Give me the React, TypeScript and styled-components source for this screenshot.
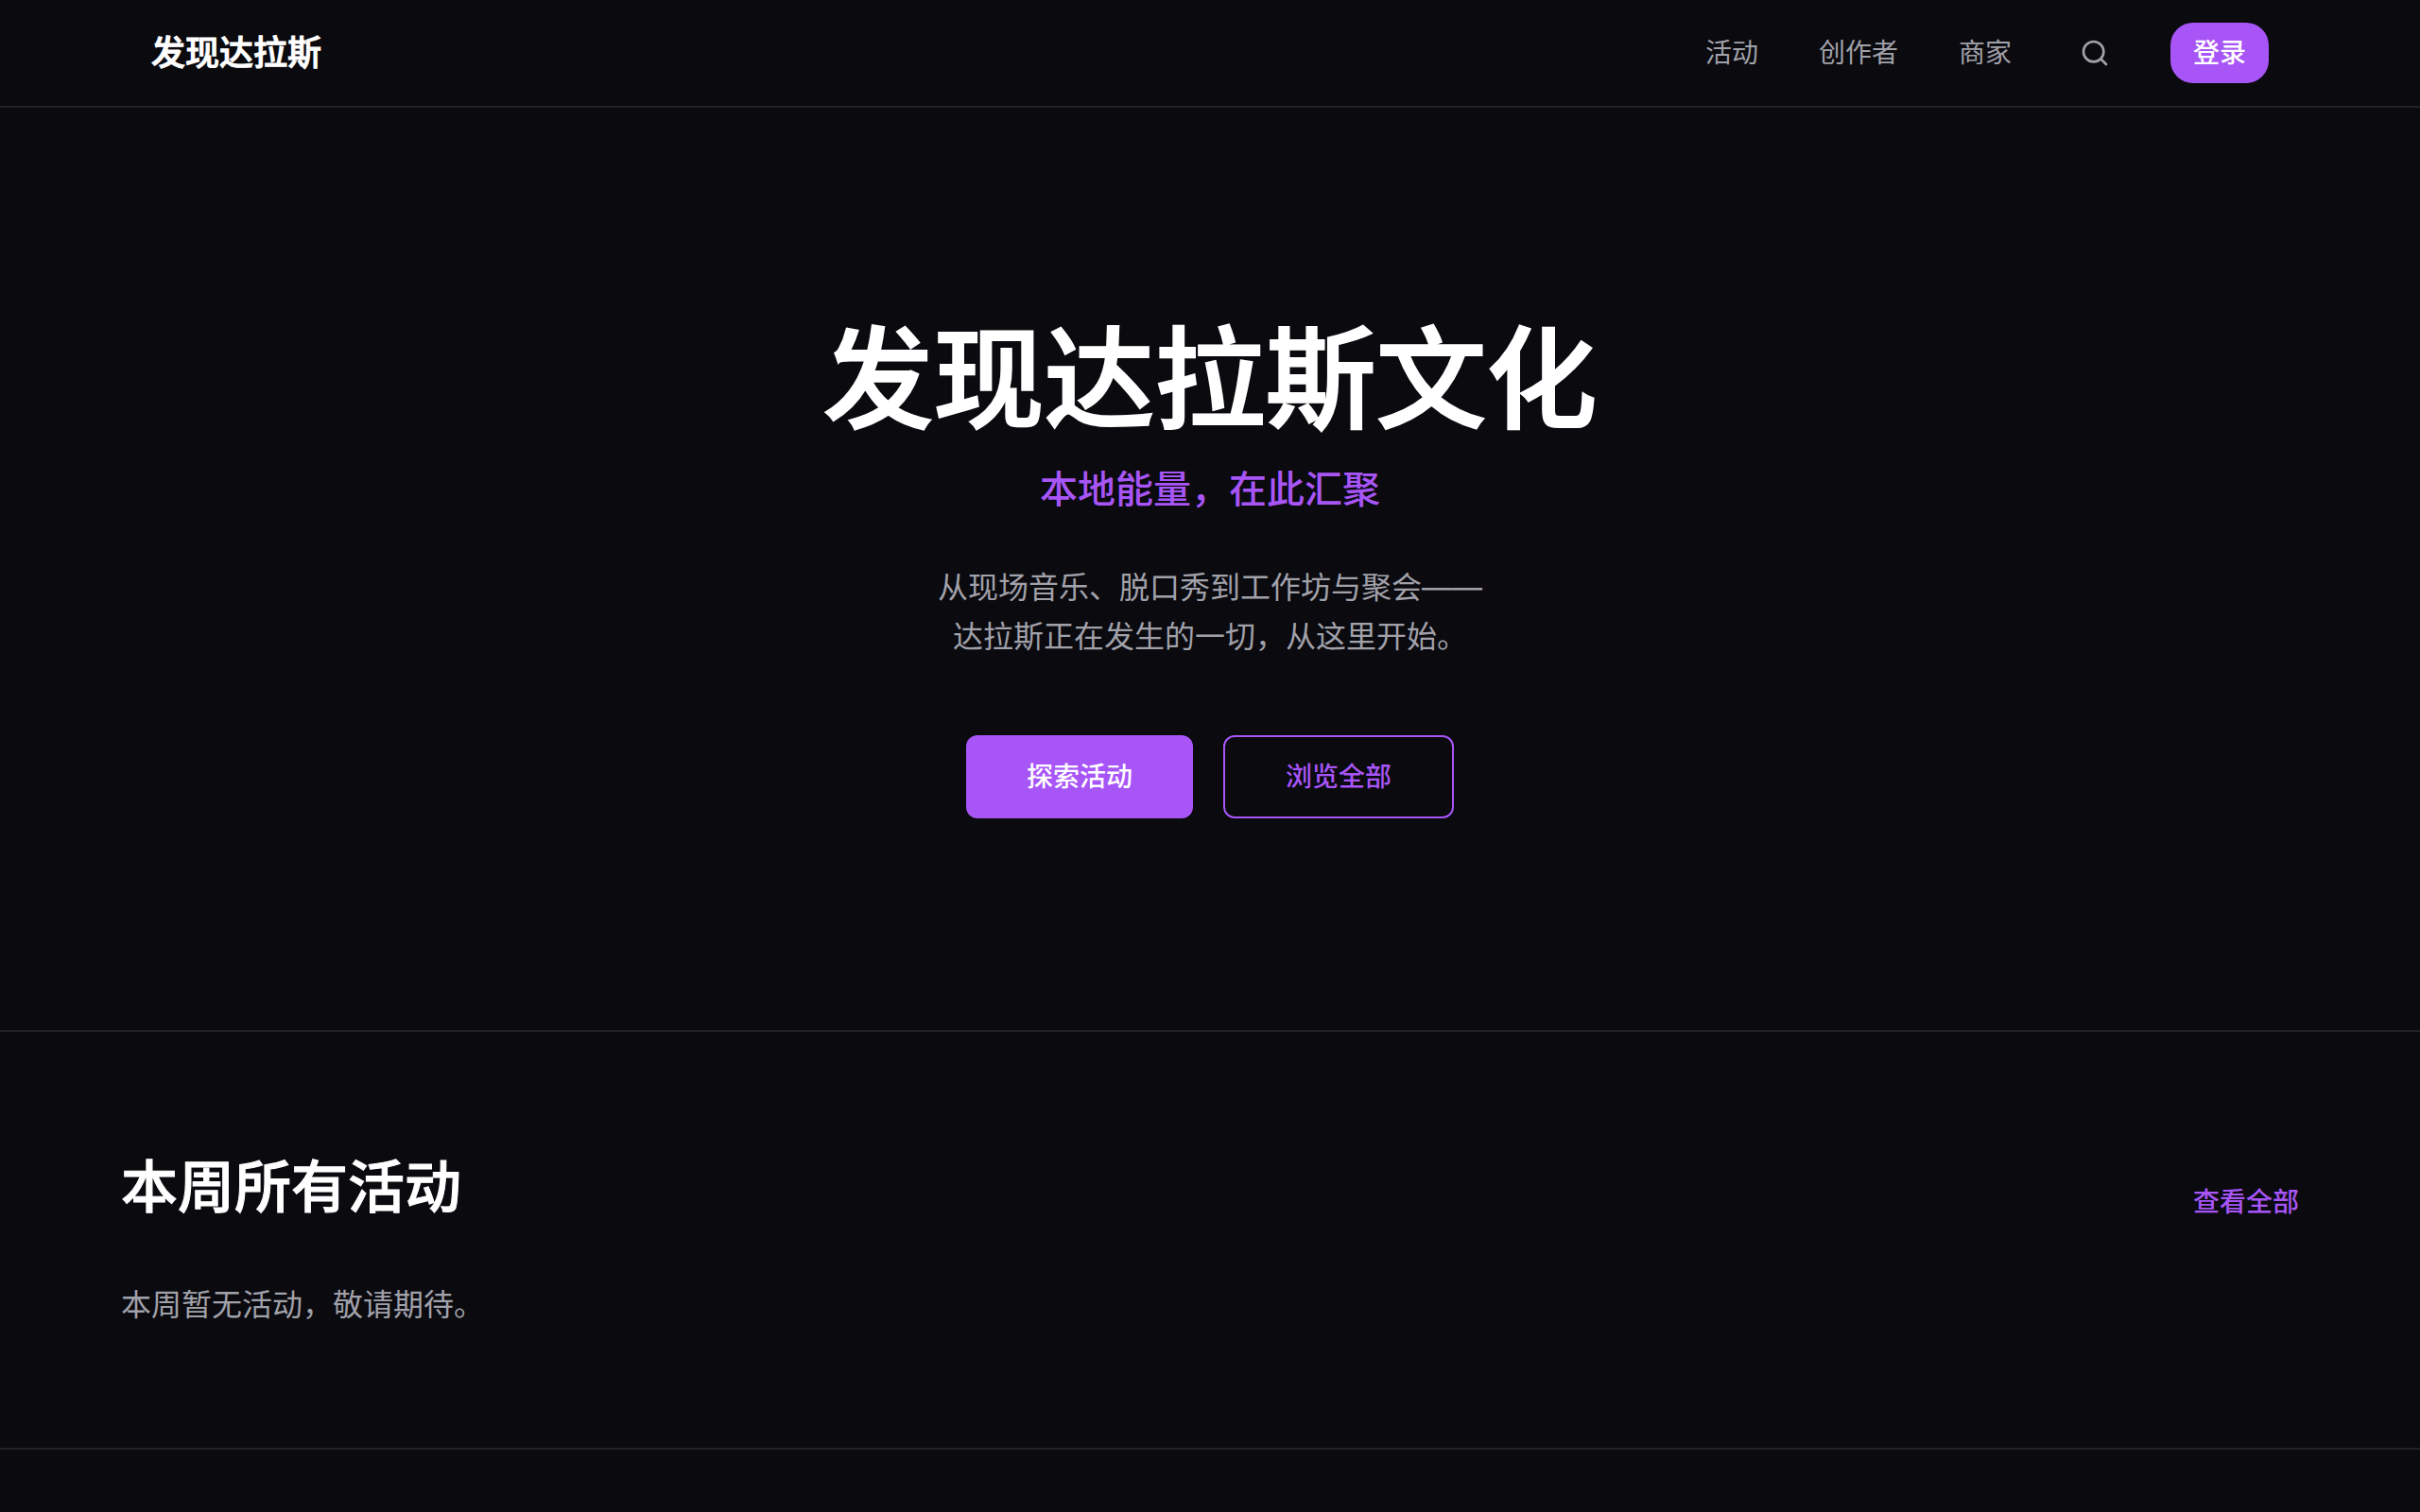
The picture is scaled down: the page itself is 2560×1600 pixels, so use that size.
import React from 'react';
import styled, { createGlobalStyle } from 'styled-components';

const GlobalStyle = createGlobalStyle`
  *, *::before, *::after { box-sizing: border-box; }
  body {
    margin: 0;
    background: #0a0a0f;
    color: #ffffff;
    font-family: Inter, "Noto Sans CJK SC", sans-serif;
    font-size: 28px;
    line-height: 40px;
    -webkit-font-smoothing: antialiased;
  }
  h1, h2, p { margin: 0; }
  a { color: inherit; text-decoration: none; }
  button { font: inherit; cursor: pointer; }
`;

const Header = styled.header`
  display: flex;
  align-items: center;
  justify-content: space-between;
  padding: 24px 160px;
  border-bottom: 2px solid #232327;
`;

const Logo = styled.a`
  font-size: 36px;
  font-weight: 500;
  -webkit-text-stroke: 1px currentColor;
`;

const Nav = styled.nav`
  display: flex;
  align-items: center;
  gap: 64px;
  color: #a1a1aa;
`;

const Actions = styled.div`
  display: flex;
  align-items: center;
  gap: 56px;
`;

const IconButton = styled.button`
  display: flex;
  padding: 8px;
  border: 0;
  background: none;
  color: #a1a1aa;
`;

const LoginButton = styled.button`
  padding: 12px 24px;
  border: 0;
  border-radius: 24px;
  background: #a855f7;
  color: #ffffff;
  font-weight: 500;
`;

const Hero = styled.section`
  display: flex;
  flex-direction: column;
  align-items: center;
  padding: 224px 128px;
  border-bottom: 2px solid #232327;
  text-align: center;
`;

const Title = styled.h1`
  font-size: 117px;
  font-weight: 500;
  line-height: 128px;
  -webkit-text-stroke: 2px currentColor;
`;

const Tagline = styled.p`
  margin-top: 24px;
  color: #a855f7;
  font-size: 40px;
  font-weight: 500;
  line-height: 56px;
`;

const Lead = styled.p`
  margin-top: 50px;
  color: #a1a1aa;
  font-size: 32px;
  line-height: 52px;
`;

const ButtonRow = styled.div`
  display: flex;
  gap: 32px;
  margin-top: 78px;
`;

const ActionLink = styled.a<{ $outline?: boolean }>`
  padding: ${(p) => (p.$outline ? '22px 64px' : '24px 64px')};
  border: ${(p) => (p.$outline ? '2px solid #a855f7' : '0')};
  border-radius: 12px;
  background: ${(p) => (p.$outline ? 'transparent' : '#a855f7')};
  color: ${(p) => (p.$outline ? '#a855f7' : '#ffffff')};
  font-weight: 500;
`;

const Events = styled.section`
  padding: 128px 128px 126px;
  border-bottom: 2px solid #232327;
`;

const EventsHeader = styled.div`
  display: flex;
  align-items: flex-end;
  justify-content: space-between;
  margin-bottom: 64px;
`;

const SectionTitle = styled.h2`
  font-size: 60px;
  font-weight: 500;
  line-height: 72px;
  -webkit-text-stroke: 1px currentColor;
`;

const ViewAll = styled.a`
  color: #a855f7;
  font-weight: 500;
`;

const EmptyText = styled.p`
  color: #a1a1aa;
  font-size: 32px;
  line-height: 50px;
`;

const SearchIcon = () => (
  <svg width="32" height="32" viewBox="0 0 24 24" fill="none" stroke="currentColor" strokeWidth="2" strokeLinecap="round" strokeLinejoin="round" aria-hidden="true">
    <circle cx="11" cy="11" r="8" />
    <path d="m21 21-4.35-4.35" />
  </svg>
);

export default function App() {
  return (
    <div lang="zh-CN">
      <GlobalStyle />
      <Header>
        <Logo href="#">发现达拉斯</Logo>
        <Nav>
          <a href="#events">活动</a>
          <a href="#creators">创作者</a>
          <a href="#business">商家</a>
          <Actions>
            <IconButton type="button" aria-label="搜索">
              <SearchIcon />
            </IconButton>
            <LoginButton type="button">登录</LoginButton>
          </Actions>
        </Nav>
      </Header>
      <main>
        <Hero>
          <Title>发现达拉斯文化</Title>
          <Tagline>本地能量，在此汇聚</Tagline>
          <Lead>
            从现场音乐、脱口秀到工作坊与聚会——
            <br />
            达拉斯正在发生的一切，从这里开始。
          </Lead>
          <ButtonRow>
            <ActionLink href="#explore">探索活动</ActionLink>
            <ActionLink href="#all" $outline>浏览全部</ActionLink>
          </ButtonRow>
        </Hero>
        <Events id="events">
          <EventsHeader>
            <SectionTitle>本周所有活动</SectionTitle>
            <ViewAll href="#all">查看全部</ViewAll>
          </EventsHeader>
          <EmptyText>本周暂无活动，敬请期待。</EmptyText>
        </Events>
      </main>
    </div>
  );
}
